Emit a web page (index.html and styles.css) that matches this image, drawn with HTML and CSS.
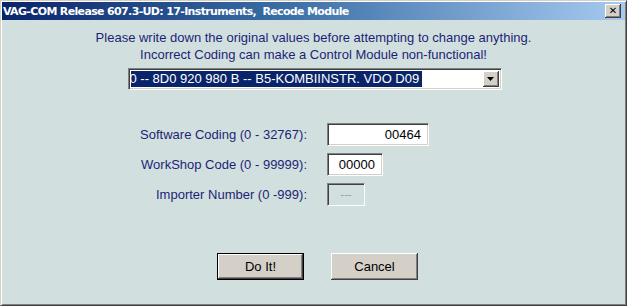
FILE: index.html
```html
<!DOCTYPE html>
<html lang="en">
<head>
  <meta charset="UTF-8">
  <title>VAG-COM Recode Module</title>
  <link rel="stylesheet" href="styles.css">
</head>
<body>
<div class="window">
  <div class="titlebar">
    <span class="title">VAG-COM Release 607.3-UD: 17-Instruments,&nbsp; Recode Module</span>
    <button class="close-btn">&#x2715;</button>
  </div>

  <div class="content">
    <p class="notice">Please write down the original values before attempting to change anything.</p>
    <p class="notice">Incorrect Coding can make a Control Module non-functional!</p>

    <div class="combo">
      <span class="combo-value"><span class="selected">0 -- 8D0 920 980 B -- B5-KOMBIINSTR. VDO D09</span></span>
      <span class="combo-arrow"><svg width="7" height="4" viewBox="0 0 7 4"><path d="M0 0h7L3.5 4z" fill="#000"/></svg></span>
    </div>

    <div class="fields">
      <div class="field">
        <label>Software Coding (0 - 32767):</label>
        <span class="input wide">00464</span>
      </div>
      <div class="field">
        <label>WorkShop Code (0 - 99999):</label>
        <span class="input mid">00000</span>
      </div>
      <div class="field">
        <label>Importer Number (0 -999):</label>
        <span class="input small disabled">---</span>
      </div>
    </div>

    <div class="buttons">
      <button class="btn default">Do It!</button>
      <button class="btn">Cancel</button>
    </div>
  </div>
</div>
</body>
</html>
```

FILE: styles.css
```css
* { margin: 0; padding: 0; box-sizing: border-box; }
body {
  background: #d4d0c8;
  font-family: 'Liberation Sans', Arial, sans-serif;
  font-size: 13px;
}
.window {
  width: 627px;
  height: 306px;
  padding: 1px 1px 4px 1px;
  background: #d2dfdf;
  border-top: 1px solid #d4d0c8;
  border-left: 1px solid #d4d0c8;
  border-right: 1px solid #404040;
  border-bottom: 1px solid #404040;
  box-shadow: inset 1px 1px 0 #ffffff, inset -1px -1px 0 #808080;
  display: flex;
  flex-direction: column;
}
.titlebar {
  height: 18px;
  background: linear-gradient(90deg, #0a246a 0%, #3a6ea5 45%, #a6caf0 100%);
  display: flex;
  align-items: center;
  justify-content: space-between;
  padding: 0 4px 0 1px;
}
.title {
  color: #fff;
  font-family: 'DejaVu Sans', Tahoma, sans-serif;
  font-weight: bold;
  font-size: 11px;
  letter-spacing: -0.65px;
  white-space: nowrap;
}
.close-btn {
  width: 16px;
  height: 14px;
  background: #d4d0c8;
  border: none;
  box-shadow: inset -1px -1px 0 #404040, inset 1px 1px 0 #fff, inset -2px -2px 0 #808080;
  font-size: 10px;
  font-weight: bold;
  line-height: 12px;
  color: #000;
  font-family: 'DejaVu Sans', sans-serif;
  padding: 0 0 1px 0;
}
.content {
  flex: 1;
  display: flex;
  flex-direction: column;
  align-items: center;
  padding-top: 9px;
  color: #1c1f76;
}
.notice {
  line-height: 17px;
  text-align: center;
}
.combo {
  margin-top: 5px;
  margin-left: 2px;
  width: 374px;
  height: 22px;
  background: #fff;
  border-top: 1px solid #808080;
  border-left: 1px solid #808080;
  border-right: 1px solid #fff;
  border-bottom: 1px solid #fff;
  box-shadow: inset 1px 1px 0 #404040, inset -1px -1px 0 #d4d0c8;
  display: flex;
  align-items: center;
  padding: 2px;
}
.combo-value {
  flex: 1;
  overflow: hidden;
  padding-left: 1px;
  height: 16px;
}
.selected {
  display: inline-block;
  background: #0a246a;
  color: #fff;
  line-height: 16px;
  padding-right: 3px;
  margin-left: -2px;
  white-space: nowrap;
}
.combo-arrow {
  width: 16px;
  height: 16px;
  background: #d4d0c8;
  box-shadow: inset -1px -1px 0 #404040, inset 1px 1px 0 #fff, inset -2px -2px 0 #808080;
  display: flex;
  align-items: center;
  justify-content: center;
}
.fields {
  align-self: stretch;
  margin-top: 32px;
  display: flex;
  flex-direction: column;
  gap: 6px;
}
.field {
  display: flex;
  align-items: center;
  height: 24px;
}
.field label {
  width: 305px;
  text-align: right;
}
.input {
  margin-left: 20px;
  height: 23px;
  background: #fff;
  color: #000;
  border-top: 1px solid #808080;
  border-left: 1px solid #808080;
  border-right: 1px solid #fff;
  border-bottom: 1px solid #fff;
  box-shadow: inset 1px 1px 0 #404040, inset -1px -1px 0 #d4d0c8;
  line-height: 21px;
  text-align: right;
  padding-right: 7px;
}
.input.wide { width: 102px; }
.input.mid { width: 56px; }
.input.small {
  width: 38px;
  text-align: center;
  padding: 0;
  font-size: 11px;
}
.input.disabled {
  background: #d2dfdf;
  color: #9a9a9a;
  box-shadow: inset 1px 1px 0 #404040, inset -1px -1px 0 #d2dfdf;
}
.buttons {
  margin-top: 47px;
  margin-left: 8px;
  display: flex;
  gap: 27px;
}
.btn {
  width: 87px;
  height: 27px;
  background: #d4d0c8;
  border: none;
  font-family: 'Liberation Sans', Arial, sans-serif;
  font-size: 13px;
  color: #000;
  box-shadow: inset -1px -1px 0 #404040, inset 1px 1px 0 #fff, inset -2px -2px 0 #808080;
}
.btn.default {
  box-shadow: inset 0 0 0 1px #000, inset -2px -2px 0 #404040, inset 2px 2px 0 #fff, inset -3px -3px 0 #808080;
}
```
